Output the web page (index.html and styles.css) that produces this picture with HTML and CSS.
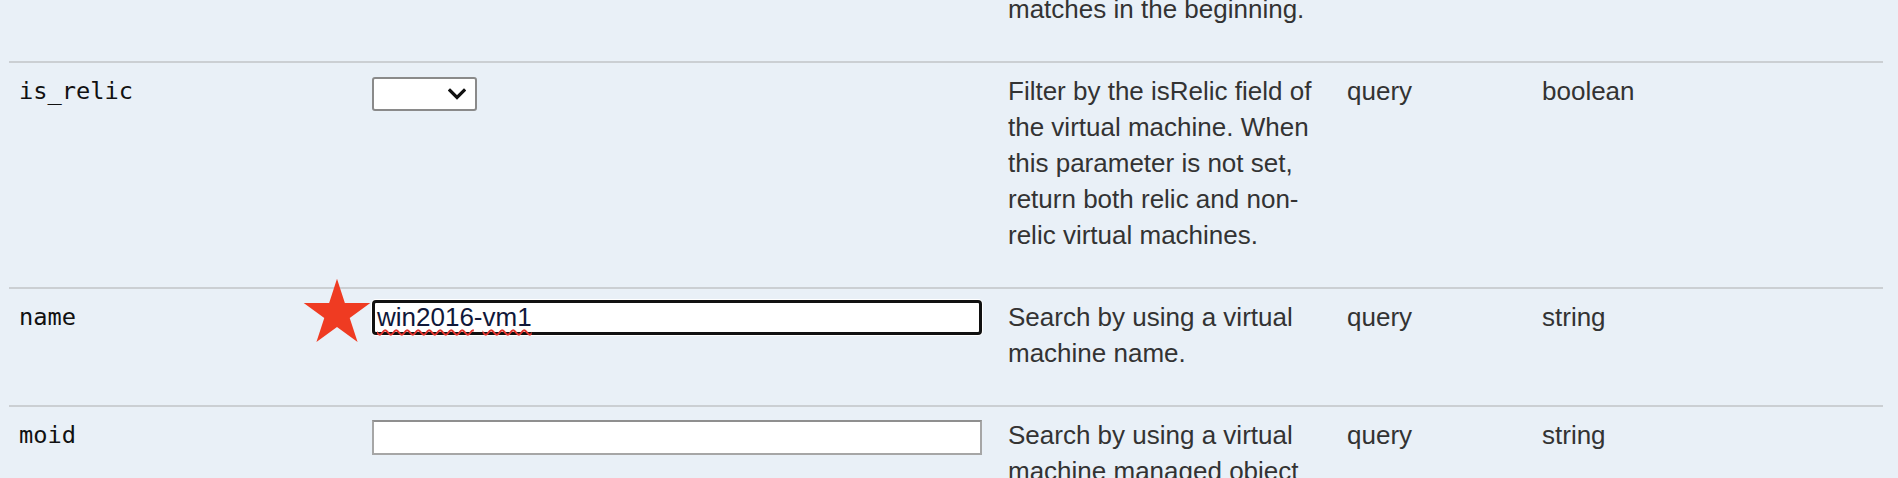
FILE: index.html
```html
<!DOCTYPE html>
<html lang="en">
<head>
<meta charset="utf-8">
<title>Parameters</title>
<link rel="stylesheet" href="styles.css">
</head>
<body>
<div class="params">
  <div class="row">
    <div class="cell c-name"></div>
    <div class="cell c-ctrl"></div>
    <div class="cell c-desc">matches in the beginning.</div>
    <div class="cell c-in"></div>
    <div class="cell c-type"></div>
  </div>
  <div class="row">
    <div class="cell c-name">is_relic</div>
    <div class="cell c-ctrl">
      <div class="select-wrap">
        <select class="select" aria-label="is_relic">
          <option value=""></option>
          <option value="true">true</option>
          <option value="false">false</option>
        </select>
        <svg class="chev" viewBox="0 0 18 12" width="18" height="12" aria-hidden="true"><path d="M2 2.5 L9 9.5 L16 2.5" fill="none" stroke="#111" stroke-width="3.2" stroke-linecap="square" stroke-linejoin="miter"/></svg>
      </div>
    </div>
    <div class="cell c-desc">Filter by the isRelic field of the virtual machine. When this parameter is not set, return both relic and non-relic virtual machines.</div>
    <div class="cell c-in">query</div>
    <div class="cell c-type">boolean</div>
  </div>
  <div class="row">
    <div class="cell c-name">name</div>
    <div class="cell c-ctrl">
      <svg class="star" viewBox="0 0 100 100" width="70" height="70" aria-hidden="true"><polygon points="50,2.5 61.23,37.05 97.55,37.05 68.17,58.4 79.39,92.95 50,71.6 20.61,92.95 31.83,58.4 2.45,37.05 38.77,37.05" fill="#ef3b22"/></svg>
      <div class="input focused" role="textbox" aria-label="name"><span class="typo">win2016</span>-<span class="typo">vm1</span></div>
    </div>
    <div class="cell c-desc">Search by using a virtual machine name.</div>
    <div class="cell c-in">query</div>
    <div class="cell c-type">string</div>
  </div>
  <div class="row">
    <div class="cell c-name">moid</div>
    <div class="cell c-ctrl">
      <input class="input" type="text" aria-label="moid">
    </div>
    <div class="cell c-desc">Search by using a virtual machine managed object ID.</div>
    <div class="cell c-in">query</div>
    <div class="cell c-type">string</div>
  </div>
</div>
</body>
</html>
```

FILE: styles.css
```css
html, body {
  margin: 0;
  padding: 0;
  background: #e9f0f7;
  overflow: hidden;
}

body {
  font-family: "Liberation Sans", Arial, sans-serif;
  font-size: 26px;
  color: #333;
}

.params {
  margin: -19px 15px 0 9px;
}

.row {
  display: grid;
  grid-template-columns: 353px 636px 339px 195px 1fr;
  padding: 10px 0 34px;
  border-bottom: 2px solid #cbcfd3;
  line-height: 36px;
}

.cell {
  padding: 0 10px;
}

.c-name {
  font-family: "DejaVu Sans Mono", "Liberation Mono", monospace;
  font-size: 23.7px;
  color: #111;
}

.c-ctrl {
  position: relative;
}

.select-wrap {
  position: relative;
  display: inline-block;
  margin-top: 4px;
  vertical-align: top;
}

.select {
  appearance: none;
  -webkit-appearance: none;
  display: block;
  width: 105px;
  height: 34px;
  box-sizing: border-box;
  border: 2px solid #8a8a8a;
  border-radius: 3px;
  background: #fff;
  font-family: "Liberation Sans", Arial, sans-serif;
  font-size: 22px;
  margin: 0;
}

.chev {
  position: absolute;
  right: 11px;
  top: 11px;
  pointer-events: none;
}

.input {
  display: block;
  box-sizing: border-box;
  width: 610px;
  height: 35px;
  margin: 3px 0 0;
  padding: 0 3px;
  border: 2px solid #a6a6a6;
  border-top-color: #8f8f8f;
  background: #fff;
  font-family: "Liberation Sans", Arial, sans-serif;
  font-size: 26px;
  color: #111;
  line-height: 30px;
}

.input.focused {
  margin-top: 1px;
  border: 3px solid #111;
  border-radius: 4px;
  box-shadow: 0 0 0 1px #fff;
  padding: 0 2px;
  line-height: 29px;
  white-space: nowrap;
  color: #10183a;
}

.typo {
  text-decoration: underline wavy #e2332c;
  text-decoration-thickness: 1.5px;
  text-underline-offset: 3px;
}

.star {
  position: absolute;
  left: -60px;
  top: -22px;
}
```
